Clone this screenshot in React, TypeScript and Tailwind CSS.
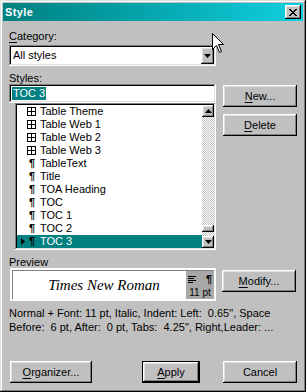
import React from "react";

const raised =
  "shadow-[inset_-1px_-1px_#000,inset_1px_1px_#fff,inset_-2px_-2px_#808080,inset_2px_2px_#dfdfdf]";
const sunken =
  "shadow-[inset_-1px_-1px_#fff,inset_1px_1px_#808080,inset_-2px_-2px_#dfdfdf,inset_2px_2px_#000]";

function Btn({
  label,
  hot,
  width,
  isDefault,
  className = "",
}: {
  label: string;
  hot?: number;
  width: string;
  isDefault?: boolean;
  className?: string;
}) {
  const text =
    hot === undefined ? (
      label
    ) : (
      <>
        {label.slice(0, hot)}
        <span className="underline underline-offset-[2px]">{label[hot]}</span>
        {label.slice(hot + 1)}
      </>
    );
  if (isDefault) {
    return (
      <div className={`h-[22px] ${width} border border-black ${className}`}>
        <div className={`flex h-full items-center justify-center bg-[#c0c0c0] ${raised}`}>
          {text}
        </div>
      </div>
    );
  }
  return (
    <div
      className={`flex h-[22px] ${width} items-center justify-center bg-[#c0c0c0] ${raised} ${className}`}
    >
      {text}
    </div>
  );
}

function Arrow({ up }: { up?: boolean }) {
  return (
    <div className={`flex h-[12px] w-[12px] items-center justify-center bg-[#c0c0c0] ${raised}`}>
      <svg width="7" height="4" viewBox="0 0 7 4">
        {up ? (
          <path d="M3.5 0 L7 4 L0 4 Z" fill="#000" />
        ) : (
          <path d="M0 0 L7 0 L3.5 4 Z" fill="#000" />
        )}
      </svg>
    </div>
  );
}

function TableIcon() {
  return (
    <svg width="9" height="9" viewBox="0 0 9 9" shapeRendering="crispEdges">
      <rect x="0.5" y="0.5" width="8" height="8" fill="none" stroke="#000" />
      <line x1="4.5" y1="0" x2="4.5" y2="9" stroke="#000" />
      <line x1="0" y1="4.5" x2="9" y2="4.5" stroke="#000" />
    </svg>
  );
}

const styles: { name: string; table?: boolean; selected?: boolean }[] = [
  { name: "Table Theme", table: true },
  { name: "Table Web 1", table: true },
  { name: "Table Web 2", table: true },
  { name: "Table Web 3", table: true },
  { name: "TableText" },
  { name: "Title" },
  { name: "TOA Heading" },
  { name: "TOC" },
  { name: "TOC 1" },
  { name: "TOC 2" },
  { name: "TOC 3", selected: true },
];

export default function App() {
  return (
    <div className="font-['Liberation_Sans',Arial,sans-serif] text-[11px] text-black">
      <div
        className={`relative flex h-[392px] w-[306px] flex-col bg-[#c0c0c0] p-[3px] shadow-[inset_-1px_-1px_#000,inset_1px_1px_#dfdfdf,inset_-2px_-2px_#808080,inset_2px_2px_#fff]`}
      >
        {/* Title bar */}
        <div className="flex h-[18px] items-center justify-between bg-gradient-to-r from-[#008080] to-[#10d0e0] pl-[2px] pr-[2px]">
          <span className="text-[11px] font-bold tracking-[0.4px] text-white">Style</span>
          <div className={`flex h-[14px] w-[16px] items-center justify-center bg-[#c0c0c0] ${raised}`}>
            <svg width="8" height="7" viewBox="0 0 8 7" shapeRendering="crispEdges">
              <path
                d="M0 0h2v1h1v1h2v-1h1v-1h2v1h-1v1h-1v1h-1v1h1v1h1v1h1v1h-2v-1h-1v-1h-2v1h-1v1h-2v-1h1v-1h1v-1h1v-1h-1v-1h-1v-1h-1z"
                fill="#000"
              />
            </svg>
          </div>
        </div>

        {/* Body */}
        <div className="flex flex-1 flex-col px-[6px] pb-[6px]">
          <div className="mt-[9px] h-[13px] leading-[13px]">
            <span className="underline underline-offset-[2px]">C</span>ategory:
          </div>
          <div className={`mt-[2px] flex h-[21px] w-[207px] items-center bg-white p-[2px] ${sunken}`}>
            <span className="flex-1 pl-[2px]">All styles</span>
            <div className={`flex h-[17px] w-[13px] items-center justify-center bg-[#c0c0c0] ${raised}`}>
              <svg width="7" height="4" viewBox="0 0 7 4">
                <path d="M0 0 L7 0 L3.5 4 Z" fill="#000" />
              </svg>
            </div>
          </div>

          <div className="flex">
            {/* Left column */}
            <div className="flex w-[207px] flex-col">
              <div className="mt-[6px] h-[12px] leading-[12px]">
                <span className="underline underline-offset-[2px]">S</span>tyles:
              </div>
              <div className={`flex h-[19px] items-center bg-white p-[2px] ${sunken}`}>
                <span className="ml-[1px] bg-[#008080] px-[1px] leading-[13px] text-white">TOC 3</span>
              </div>
              <div className={`ml-[6px] flex h-[147px] w-[201px] bg-white p-[2px] ${sunken}`}>
                <div className="flex flex-1 flex-col">
                  {styles.map((s) => (
                    <div
                      key={s.name}
                      className={`flex h-[13px] items-center ${s.selected ? "bg-[#008080]" : ""}`}
                    >
                      <div className="flex w-[8px] justify-end">
                        {s.selected && (
                          <svg width="4" height="7" viewBox="0 0 4 7">
                            <path d="M0 0 L4 3.5 L0 7 Z" fill="#000" />
                          </svg>
                        )}
                      </div>
                      <div className="ml-[1px] flex w-[10px] justify-center">
                        {s.table ? (
                          <TableIcon />
                        ) : (
                          <span className="pl-[2px] font-bold leading-[13px] text-black">¶</span>
                        )}
                      </div>
                      <span className={`ml-[4px] leading-[13px] ${s.selected ? "text-white" : ""}`}>
                        {s.name}
                      </span>
                    </div>
                  ))}
                </div>
                {/* Scrollbar */}
                <div className="flex w-[12px] flex-col bg-[repeating-conic-gradient(#c0c0c0_0_25%,#fff_0_50%)] bg-[length:2px_2px]">
                  <Arrow up />
                  <div className="flex-1" />
                  <div className={`h-[7px] w-[12px] bg-[#c0c0c0] ${raised}`} />
                  <div className="h-[4px]" />
                  <Arrow />
                </div>
              </div>
            </div>

            {/* Right column */}
            <div className="ml-[7px] flex flex-col pt-[19px]">
              <Btn label="New..." hot={0} width="w-[74px]" />
              <Btn label="Delete" hot={0} width="w-[74px]" className="mt-[7px]" />
            </div>
          </div>

          <div className="mt-[6px] h-[12px] leading-[12px]">Preview</div>
          <div className="flex">
            <div className="ml-[1px] h-[33px] w-[206px] bg-white p-[2px]">
              <div className="flex h-full border-l border-t border-[#808080]">
                <div className="flex flex-1 items-center justify-center pl-[9px] font-['Liberation_Serif',serif] text-[15px] italic">
                  Times New Roman
                </div>
                <div className="flex w-[28px] flex-col items-center bg-[#a8a8a8]">
                  <div className="mt-[3px] flex w-full items-center justify-between px-[2px]">
                    <svg width="8" height="7" viewBox="0 0 8 7" shapeRendering="crispEdges">
                      <rect x="0" y="0" width="8" height="1" fill="#000" />
                      <rect x="0" y="2" width="6" height="1" fill="#000" />
                      <rect x="0" y="4" width="8" height="1" fill="#000" />
                      <rect x="0" y="6" width="5" height="1" fill="#000" />
                    </svg>
                    <span className="font-bold leading-[10px] text-black">¶</span>
                  </div>
                  <div className="mt-[3px] text-[10px] leading-[11px]">11 pt</div>
                </div>
              </div>
            </div>
            <div className="ml-[6px] pt-[2px]">
              <Btn label="Modify..." hot={0} width="w-[74px]" />
            </div>
          </div>

          <div className="mt-[5px] whitespace-pre leading-[14px]">
            {'Normal + Font: 11 pt, Italic, Indent: Left:  0.65", Space'}
            {"\n"}
            {'Before:  6 pt, After:  0 pt, Tabs:  4.25", Right,Leader: ...'}
          </div>

          <div className="mt-auto flex">
            <Btn label="Organizer..." hot={0} width="w-[82px]" className="ml-[1px]" />
            <Btn label="Apply" hot={0} width="w-[58px]" isDefault className="ml-[50px]" />
            <Btn label="Cancel" width="w-[74px]" className="ml-[23px]" />
          </div>
        </div>

        {/* Mouse pointer */}
        <svg
          className="absolute left-[212px] top-[33px]"
          width="13"
          height="21"
          viewBox="0 0 13 21"
        >
          <path
            d="M0.5 0.5 L0.5 16.5 L4.5 12.5 L7.5 19.5 L9.5 18.5 L6.5 11.5 L11.5 11.5 Z"
            fill="#fff"
            stroke="#000"
            strokeWidth="1"
          />
        </svg>
      </div>
    </div>
  );
}
